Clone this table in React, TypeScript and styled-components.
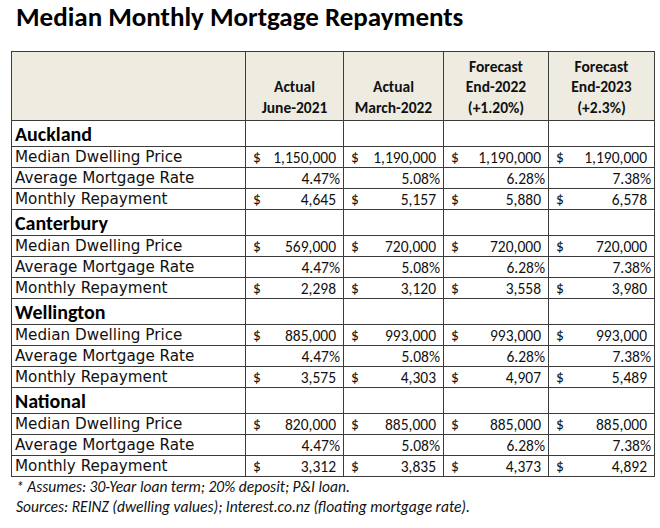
import React from "react";
import styled, { createGlobalStyle } from "styled-components";

const GlobalStyle = createGlobalStyle`
  html, body { margin: 0; padding: 0; background: #ffffff; }
  body { font-family: "Carlito", Lato, "Liberation Sans", sans-serif; color: #000; }
`;

const CAL = `"Carlito", Lato, "Liberation Sans", sans-serif`;
const VERD = `"DejaVu Sans", Verdana, sans-serif`;

const Page = styled.div`
  width: 660px;
  height: 528px;
  box-sizing: border-box;
  padding: 2px 0 0 11px;
  overflow: hidden;
`;

const Title = styled.h1`
  margin: 0 0 0 5px;
  font-family: ${CAL};
  font-weight: 700;
  font-size: 27px;
  line-height: 30px;
  height: 49px;
  letter-spacing: 0;
`;

const Table = styled.table`
  border-collapse: collapse;
  table-layout: fixed;
  width: 644px;
`;

const HeadRow = styled.tr`
  height: 69px;
  background: #eeece1;
`;

const HeadCell = styled.th`
  border: 1px solid #3c3c3c;
  font-family: ${CAL};
  font-weight: 700;
  font-size: 15.5px;
  line-height: 20.5px;
  text-align: center;
  vertical-align: bottom;
  padding: 0 2px 2px;
  color: #111;
`;

const SectionRow = styled.tr`
  height: 26px;
`;

const SectionLabel = styled.td`
  border: 1px solid #3c3c3c;
  font-family: ${CAL};
  font-weight: 700;
  font-size: 20px;
  line-height: 24px;
  padding: 0 0 0 3px;
  vertical-align: middle;
`;

const DataRow = styled.tr`
  height: 21px;
`;

const Cell = styled.td`
  border: 1px solid #3c3c3c;
  padding: 0;
  vertical-align: middle;
`;

const Label = styled(Cell)`
  font-family: ${VERD};
  font-size: 15.2px;
  line-height: 19px;
  padding-left: 3px;
  white-space: nowrap;
  color: #111;
`;

const Money = styled.div`
  display: flex;
  justify-content: space-between;
  font-family: ${CAL};
  font-size: 15.5px;
  line-height: 19px;
  padding: 0 7px 0 7px;
  color: #111;
`;

const Percent = styled.div`
  font-family: ${CAL};
  font-size: 15.5px;
  line-height: 19px;
  text-align: right;
  padding-right: 3px;
  color: #111;
`;

const Notes = styled.div`
  margin: 0 0 0 5px;
  font-family: ${CAL};
  font-style: italic;
  font-size: 15.5px;
  line-height: 20px;
  color: #111;
`;

type Region = {
  name: string;
  price: string[];
  rate: string[];
  repay: string[];
};

const rates = ["4.47%", "5.08%", "6.28%", "7.38%"];

const regions: Region[] = [
  {
    name: "Auckland",
    price: ["1,150,000", "1,190,000", "1,190,000", "1,190,000"],
    rate: rates,
    repay: ["4,645", "5,157", "5,880", "6,578"],
  },
  {
    name: "Canterbury",
    price: ["569,000", "720,000", "720,000", "720,000"],
    rate: rates,
    repay: ["2,298", "3,120", "3,558", "3,980"],
  },
  {
    name: "Wellington",
    price: ["885,000", "993,000", "993,000", "993,000"],
    rate: rates,
    repay: ["3,575", "4,303", "4,907", "5,489"],
  },
  {
    name: "National",
    price: ["820,000", "885,000", "885,000", "885,000"],
    rate: rates,
    repay: ["3,312", "3,835", "4,373", "4,892"],
  },
];

const MoneyCells = ({ values }: { values: string[] }) => (
  <>
    {values.map((v, i) => (
      <Cell key={i}>
        <Money>
          <span>$</span>
          <span>{v}</span>
        </Money>
      </Cell>
    ))}
  </>
);

export default function App() {
  return (
    <>
      <GlobalStyle />
      <Page>
        <Title>Median Monthly Mortgage Repayments</Title>
        <Table>
          <colgroup>
            <col style={{ width: 234 }} />
            <col style={{ width: 98 }} />
            <col style={{ width: 100 }} />
            <col style={{ width: 105 }} />
            <col style={{ width: 106 }} />
          </colgroup>
          <thead>
            <HeadRow>
              <HeadCell />
              <HeadCell>
                Actual
                <br />
                June-2021
              </HeadCell>
              <HeadCell>
                Actual
                <br />
                March-2022
              </HeadCell>
              <HeadCell>
                Forecast
                <br />
                End-2022
                <br />
                (+1.20%)
              </HeadCell>
              <HeadCell>
                Forecast
                <br />
                End-2023
                <br />
                (+2.3%)
              </HeadCell>
            </HeadRow>
          </thead>
          <tbody>
            {regions.map((r) => (
              <React.Fragment key={r.name}>
                <SectionRow>
                  <SectionLabel>{r.name}</SectionLabel>
                  <Cell />
                  <Cell />
                  <Cell />
                  <Cell />
                </SectionRow>
                <DataRow>
                  <Label>Median Dwelling Price</Label>
                  <MoneyCells values={r.price} />
                </DataRow>
                <DataRow>
                  <Label>Average Mortgage Rate</Label>
                  {r.rate.map((v, i) => (
                    <Cell key={i}>
                      <Percent>{v}</Percent>
                    </Cell>
                  ))}
                </DataRow>
                <DataRow>
                  <Label>Monthly Repayment</Label>
                  <MoneyCells values={r.repay} />
                </DataRow>
              </React.Fragment>
            ))}
          </tbody>
        </Table>
        <Notes>
          * Assumes: 30-Year loan term; 20% deposit; P&amp;I loan.
          <br />
          Sources: REINZ (dwelling values); Interest.co.nz (floating mortgage rate).
        </Notes>
      </Page>
    </>
  );
}
